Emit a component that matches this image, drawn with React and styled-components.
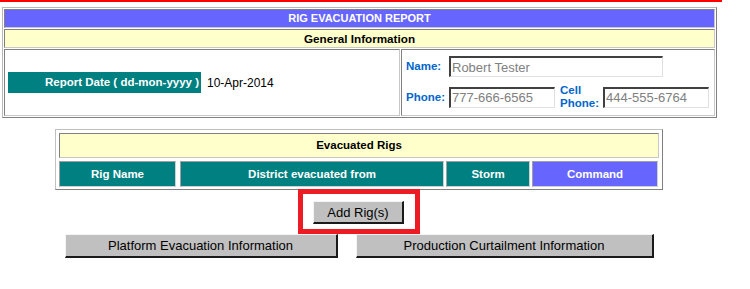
import React from "react";
import styled, { createGlobalStyle } from "styled-components";

const GlobalStyle = createGlobalStyle`
  body {
    margin: 0;
    background: #ffffff;
    font-family: "Liberation Sans", Arial, sans-serif;
  }
`;

const Page = styled.div`
  width: 718px;
`;

const TopRule = styled.div`
  width: 722px;
  height: 2px;
  background: #ff0000;
`;

const ReportTable = styled.div`
  margin: 5px 0 0 2px;
  width: 715px;
  box-sizing: border-box;
  border: 1px solid;
  border-color: #b8b8b8 #808080 #808080 #b8b8b8;
  padding: 1px;
  display: grid;
  gap: 1px;
`;

const Cell = styled.div`
  box-sizing: border-box;
  border: 1px solid;
  border-color: #808080 #c8c8c8 #c8c8c8 #808080;
  background: ${(p) => p.bg || "#ffffff"};
  color: ${(p) => p.fg || "#000000"};
  font-weight: bold;
  font-size: ${(p) => p.size || "11.5px"};
  text-align: center;
  height: ${(p) => p.h || "auto"};
  line-height: ${(p) => (p.h ? `calc(${p.h} - 2px)` : "normal")};
`;

const InfoRow = styled.div`
  display: grid;
  grid-template-columns: 396px 1fr;
  gap: 1px;
  height: 67px;
`;

const InfoCell = styled.div`
  box-sizing: border-box;
  border: 1px solid;
  border-color: #808080 #c8c8c8 #c8c8c8 #808080;
  display: flex;
  flex-direction: ${(p) => (p.stack ? "column" : "row")};
  align-items: ${(p) => (p.stack ? "stretch" : "center")};
  padding: ${(p) => (p.stack ? "6px 4px 0" : "0 3px")};
  gap: ${(p) => (p.stack ? "7px" : "6px")};
`;

const DateLabel = styled.div`
  width: 193px;
  height: 21px;
  line-height: 21px;
  box-sizing: border-box;
  background: #008080;
  color: #ffffff;
  font-weight: bold;
  font-size: 11.5px;
  text-align: right;
  padding-right: 2px;
`;

const DateValue = styled.span`
  font-size: 12px;
  color: #000000;
`;

const FieldRow = styled.div`
  display: flex;
  align-items: center;
  min-height: 21px;
`;

const FieldLabel = styled.label`
  width: ${(p) => p.w || "43px"};
  flex: none;
  color: #0066cc;
  font-weight: bold;
  font-size: 11.5px;
  line-height: 13px;
`;

const TextInput = styled.input`
  width: ${(p) => p.w};
  height: 21px;
  box-sizing: border-box;
  border: 2px solid;
  border-color: #404040 #e0e0e0 #e0e0e0 #404040;
  border-width: 2px 1px 1px 2px;
  padding: 0 0 0 1px;
  margin: 0;
  margin-right: ${(p) => p.mr || "0"};
  font-family: "Liberation Sans", Arial, sans-serif;
  font-size: 13px;
  color: #808080;
  background: #ffffff;
  outline: none;
`;

const RigsTable = styled.div`
  margin: 11px auto 0;
  width: 608px;
  box-sizing: border-box;
  border: 1px solid;
  border-color: #c0c0c0 #808080 #808080 #c0c0c0;
  padding: 3px 3px 2px;
  display: grid;
  gap: 3px;
`;

const HeaderRow = styled.div`
  display: grid;
  grid-template-columns: 118px 265px 84px 126px;
  gap: 2px;
  & > :first-child {
    margin-right: 1px;
  }
  & > :first-child + * {
    margin-left: 1px;
  }
`;

const HeadCell = styled.div`
  box-sizing: border-box;
  height: 26px;
  line-height: 24px;
  border: 1px solid;
  border-color: #a0a0a0 #d0d0d0 #d0d0d0 #a0a0a0;
  background: ${(p) => p.bg || "#008080"};
  color: #ffffff;
  font-weight: bold;
  font-size: 11.5px;
  text-align: center;
`;

const ButtonBar = styled.div`
  display: flex;
  justify-content: center;
  gap: ${(p) => p.gap || "0"};
  margin-top: ${(p) => p.mt || "0"};
`;

const Highlight = styled.div`
  border: 5px solid #ed1c24;
  padding: 7px 11px 5px 10px;
`;

const Button = styled.button`
  width: ${(p) => p.w};
  height: ${(p) => p.h || "23px"};
  box-sizing: border-box;
  margin: 0;
  padding: 0;
  background: #c0c0c0;
  border-style: solid;
  border-width: 1px 2px 2px 1px;
  border-color: #f4f4f4 #1a1a1a #1a1a1a #f4f4f4;
  font-family: "Liberation Sans", Arial, sans-serif;
  font-size: 13px;
  color: #000000;
`;

export default function App() {
  return (
    <Page>
      <GlobalStyle />
      <TopRule />
      <ReportTable>
        <Cell bg="#6666ff" fg="#ffffff" size="11px" h="19px">
          RIG EVACUATION REPORT
        </Cell>
        <Cell bg="#ffffcc" size="11.7px" h="19px">
          General Information
        </Cell>
        <InfoRow>
          <InfoCell>
            <DateLabel>Report Date ( dd-mon-yyyy )</DateLabel>
            <DateValue>10-Apr-2014</DateValue>
          </InfoCell>
          <InfoCell stack>
            <FieldRow>
              <FieldLabel>Name:</FieldLabel>
              <TextInput w="214px" defaultValue="Robert Tester" />
            </FieldRow>
            <FieldRow>
              <FieldLabel>Phone:</FieldLabel>
              <TextInput w="106px" mr="5px" defaultValue="777-666-6565" />
              <FieldLabel w="43px">
                Cell
                <br />
                Phone:
              </FieldLabel>
              <TextInput w="106px" defaultValue="444-555-6764" />
            </FieldRow>
          </InfoCell>
        </InfoRow>
      </ReportTable>

      <RigsTable>
        <Cell bg="#ffffcc" h="25px">
          Evacuated Rigs
        </Cell>
        <HeaderRow>
          <HeadCell>Rig Name</HeadCell>
          <HeadCell>District evacuated from</HeadCell>
          <HeadCell>Storm</HeadCell>
          <HeadCell bg="#6666ff">Command</HeadCell>
        </HeaderRow>
      </RigsTable>

      <ButtonBar mt="-1px">
        <Highlight>
          <Button w="91px">Add Rig(s)</Button>
        </Highlight>
      </ButtonBar>

      <ButtonBar gap="18px">
        <Button w="273px" h="24px">
          Platform Evacuation Information
        </Button>
        <Button w="298px" h="24px">
          Production Curtailment Information
        </Button>
      </ButtonBar>
    </Page>
  );
}
